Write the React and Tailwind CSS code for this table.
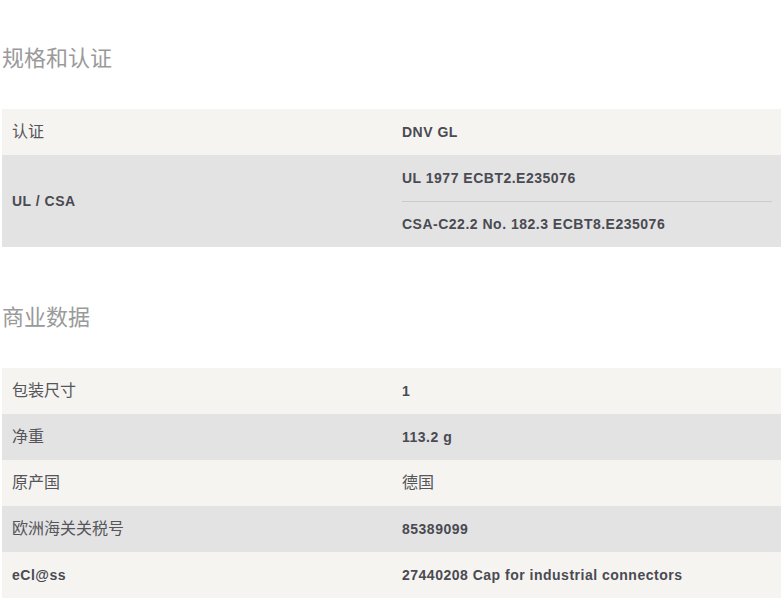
const font = { fontFamily: '"Liberation Sans", "Noto Sans CJK SC", sans-serif' };

function Row({ label, tone, children }) {
  return (
    <div className={`flex ${tone === "dark" ? "bg-[#e3e3e3]" : "bg-[#f5f4f1]"}`}>
      <div className="w-[390px] shrink-0 flex items-center px-[10px] text-[16px] text-[#55555a]">
        {label}
      </div>
      <div className="w-[390px] shrink-0 px-[10px]">{children}</div>
    </div>
  );
}

function Value({ children }) {
  return (
    <div className="h-[46px] flex items-center text-[14px] font-bold tracking-[0.5px] text-[#4a4a52]">
      {children}
    </div>
  );
}

function Latin({ children }) {
  return <span className="text-[14px] font-bold tracking-[0.5px] text-[#4a4a52]">{children}</span>;
}

export default function App() {
  return (
    <div className="w-[781px] h-[599px] overflow-hidden bg-white" style={font}>
      <div className="ml-[2px]">
        <h2 className="mt-[44px] mb-[35px] text-[22px] leading-[30px] text-[#9a9a9a]">
          规格和认证
        </h2>
        <div className="w-[780px]">
          <Row label="认证">
            <Value>DNV GL</Value>
          </Row>
          <Row label={<Latin>UL / CSA</Latin>} tone="dark">
            <Value>UL 1977 ECBT2.E235076</Value>
            <div className="h-px bg-[#cbcbcb]" />
            <div className="h-[45px] flex items-center text-[14px] font-bold tracking-[0.5px] text-[#4a4a52]">
              CSA-C22.2 No. 182.3 ECBT8.E235076
            </div>
          </Row>
        </div>

        <h2 className="mt-[56px] mb-[35px] text-[22px] leading-[30px] text-[#9a9a9a]">
          商业数据
        </h2>
        <div className="w-[780px]">
          <Row label="包装尺寸">
            <Value>1</Value>
          </Row>
          <Row label="净重" tone="dark">
            <Value>113.2 g</Value>
          </Row>
          <Row label="原产国">
            <div className="h-[46px] flex items-center text-[16px] text-[#55555a]">德国</div>
          </Row>
          <Row label="欧洲海关关税号" tone="dark">
            <Value>85389099</Value>
          </Row>
          <Row label={<Latin>eCl@ss</Latin>}>
            <Value>27440208 Cap for industrial connectors</Value>
          </Row>
        </div>
      </div>
    </div>
  );
}
